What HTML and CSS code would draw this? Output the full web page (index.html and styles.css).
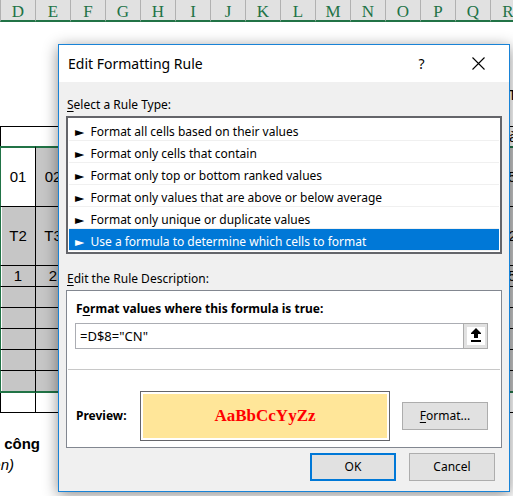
FILE: index.html
```html
<!DOCTYPE html>
<html lang="en">
<head>
<meta charset="utf-8">
<title>Edit Formatting Rule</title>
<link rel="stylesheet" href="styles.css">
</head>
<body>
<main class="sheet">
  <table class="grid">
    <thead>
      <tr><th>D</th><th>E</th><th>F</th><th>G</th><th>H</th><th>I</th><th>J</th><th>K</th><th>L</th><th>M</th><th>N</th><th>O</th><th>P</th><th>Q</th><th>R</th></tr>
    </thead>
    <tbody>
      <tr class="title-row"><td colspan="15">T</td></tr>
      <tr class="band-row"><td colspan="15">à</td></tr>
    </tbody>
    <tbody class="selection">
      <tr class="tall"><td class="active">01</td><td>02</td><td></td><td></td><td></td><td></td><td></td><td></td><td></td><td></td><td></td><td></td><td></td><td></td><td>15</td></tr>
      <tr class="tall"><td>T2</td><td>T3</td><td></td><td></td><td></td><td></td><td></td><td></td><td></td><td></td><td></td><td></td><td></td><td></td><td>T2</td></tr>
      <tr><td>1</td><td>2</td><td></td><td></td><td></td><td></td><td></td><td></td><td></td><td></td><td></td><td></td><td></td><td></td><td>15</td></tr>
      <tr><td></td><td></td><td></td><td></td><td></td><td></td><td></td><td></td><td></td><td></td><td></td><td></td><td></td><td></td><td></td></tr>
      <tr><td></td><td></td><td></td><td></td><td></td><td></td><td></td><td></td><td></td><td></td><td></td><td></td><td></td><td></td><td></td></tr>
      <tr><td></td><td></td><td></td><td></td><td></td><td></td><td></td><td></td><td></td><td></td><td></td><td></td><td></td><td></td><td></td></tr>
      <tr><td></td><td></td><td></td><td></td><td></td><td></td><td></td><td></td><td></td><td></td><td></td><td></td><td></td><td></td><td></td></tr>
      <tr class="last"><td></td><td></td><td></td><td></td><td></td><td></td><td></td><td></td><td></td><td></td><td></td><td></td><td></td><td></td><td></td></tr>
    </tbody>
    <tbody class="after">
      <tr><td></td><td></td><td></td><td></td><td></td><td></td><td></td><td></td><td></td><td></td><td></td><td></td><td></td><td></td><td></td></tr>
    </tbody>
  </table>
  <div class="notes">
    <p class="note-strong"><span><span class="marked">n</span> công</span></p>
    <p class="note-em">ên)</p>
  </div>
</main>

<section class="dialog" role="dialog" aria-labelledby="dialog-title">
  <header class="titlebar">
    <h1 id="dialog-title">Edit Formatting Rule</h1>
    <button class="caption" type="button" aria-label="Help">?</button>
    <button class="caption" type="button" aria-label="Close">
      <svg width="13" height="13" viewBox="0 0 13 13" fill="none" stroke="#000" stroke-width="1.1"><path d="M.5 .5l12 12M12.5 .5l-12 12"/></svg>
    </button>
  </header>
  <form class="body">
    <label class="caption-label" for="rule-type"><u>S</u>elect a Rule Type:</label>
    <select class="rules" id="rule-type" size="6">
      <option>►&nbsp; Format all cells based on their values</option>
      <option>►&nbsp; Format only cells that contain</option>
      <option>►&nbsp; Format only top or bottom ranked values</option>
      <option>►&nbsp; Format only values that are above or below average</option>
      <option>►&nbsp; Format only unique or duplicate values</option>
      <option selected>►&nbsp; Use a formula to determine which cells to format</option>
    </select>
    <p class="caption-label"><u>E</u>dit the Rule Description:</p>
    <div class="description">
      <div class="formula">
        <label for="formula">F<u>o</u>rmat values where this formula is true:</label>
        <div class="field">
          <input id="formula" type="text" value="=D$8=&quot;CN&quot;">
          <button class="collapse" type="button" aria-label="Collapse dialog">
            <svg width="18" height="18" viewBox="0 0 18 18"><path fill="#fff" d="M0 0h18v18H0z"/><path d="M9 1l5 5v1h-3v4H7V7H4V6zM4 13h10v2H4z"/></svg>
          </button>
        </div>
      </div>
      <div class="preview">
        <span class="preview-label">Preview:</span>
        <div class="sample"><span>AaBbCcYyZz</span></div>
        <button class="push" type="button"><u>F</u>ormat...</button>
      </div>
    </div>
    <footer class="actions">
      <button class="push default" type="button">OK</button>
      <button class="push" type="button">Cancel</button>
    </footer>
  </form>
</section>
</body>
</html>
```
FILE: styles.css
```css
* { box-sizing: border-box; }

body {
  margin: 0;
  min-height: 100vh;
  position: relative;
  overflow: hidden;
  background: #fff;
  color: #000;
  font: 12px/16px "Noto Sans", "DejaVu Sans", sans-serif;
}

h1, p { margin: 0; }

button, input, select { font: inherit; color: inherit; border-radius: 0; }

u { text-underline-offset: 2px; }

/* Worksheet */
.sheet { overflow: hidden; }

.grid {
  width: 525px;
  table-layout: fixed;
  border-collapse: separate;
  border-spacing: 0;
  font: 15px/18px "Liberation Sans", sans-serif;
}

.grid th, .grid td { padding: 0; text-align: center; }

.grid th {
  height: 22px;
  padding-top: 4px;
  background: #e1e1e1;
  border-left: 1px solid #b1b1b1;
  border-bottom: 2px solid #217346;
  color: #217346;
  font: 17px/16px "Liberation Serif", serif;
}

.title-row td, .band-row td { text-align: left; padding-left: 508px; overflow: hidden; }
.title-row td { height: 104px; padding-top: 42px; }
.band-row td {
  height: 20px;
  border-top: 1px solid #000;
  border-left: 1px solid #000;
}

.selection td, .after td {
  height: 21px;
  border-left: 1px solid #000;
  border-bottom: 1px solid #000;
}
.selection td { background: #c6c6c6; }
.selection td:first-child {
  border-left-color: #217346;
  box-shadow: inset 1px 0 #fff;
}
.selection .tall td { height: 59px; }
.selection .tall:first-child td { height: 61px; border-top: 2px solid #217346; }
.selection td.active { background: #fff; }
.selection .last td { height: 22px; border-bottom: 2px solid #217346; }
.after td { height: 20px; }

.notes { width: 40px; padding-top: 20px; font: 15px/21px "Liberation Sans", sans-serif; }
.note-strong {
  display: flex;
  justify-content: flex-end;
  white-space: nowrap;
  font-weight: bold;
}
.marked { color: #9ff; }
.note-em { display: flex; justify-content: flex-end; width: 14px; font-style: italic; }

/* Dialog */
.dialog {
  position: absolute;
  top: 44px;
  left: 58px;
  right: 3px;
  background: #f0f0f0;
  border: 1px solid #1883d7;
  box-shadow: 0 3px 14px rgba(0, 0, 0, .45);
}

.titlebar {
  display: flex;
  align-items: center;
  height: 37px;
  padding: 0 2px 0 9px;
  background: #fff;
}
.titlebar h1 { flex: 1; font-size: 14px; line-height: 20px; font-weight: normal; }
.caption {
  display: flex;
  align-items: center;
  justify-content: center;
  width: 57px;
  height: 36px;
  padding: 0;
  border: 0;
  background: none;
  font-size: 14px;
}

.body { padding: 15px 7px 10px; }

.caption-label { display: block; height: 19px; padding-left: 1px; }

.rules {
  display: block;
  width: 100%;
  height: 138px;
  margin-bottom: 17px;
  padding: 1px;
  overflow: hidden;
  border: 2px solid #64656a;
  background: #fff;
  outline: 0;
}
.rules option {
  height: 22px;
  min-height: 22px;
  padding: 4px 6px 1px;
  border-bottom: 1px solid #f0f0f0;
  line-height: 16px;
}
.rules option:checked {
  background: linear-gradient(#0078d7, #0078d7);
  -webkit-text-fill-color: #fff;
}

.description { padding: 0 1px; border: 1px solid #828790; background: #fff; }
.formula { padding: 10px 12px 20px 7px; border-bottom: 1px solid #c8c8c8; }
.formula label { display: block; height: 22px; padding-left: 1px; font-weight: bold; }
.field { display: flex; height: 26px; }
.field input {
  flex: 1;
  min-width: 0;
  padding: 0 4px;
  border: 1px solid #abadb3;
  border-right: 0;
  background: #fff;
  font-size: 13px;
  outline: 0;
}
.collapse {
  display: grid;
  place-items: center;
  width: 25px;
  padding: 0;
  border: 1px solid #acacac;
  background: #e1e1e1;
}

.preview { display: flex; align-items: center; padding: 21px 12px 6px 8px; }
.preview-label { width: 64px; font-weight: bold; }
.sample {
  flex: 1;
  height: 50px;
  padding: 2px;
  border: 1px solid #64656a;
}
.sample span {
  display: grid;
  place-items: center;
  height: 100%;
  background: #ffe699;
  color: #f00;
  font: bold 17px/20px "Liberation Serif", serif;
}
.push {
  width: 86px;
  height: 28px;
  padding: 0;
  border: 1px solid #adadad;
  background: #e1e1e1;
}
.preview .push { margin-left: 12px; }
.push.default { border: 2px solid #0078d7; }

.actions { display: flex; justify-content: flex-end; gap: 13px; padding: 5px 7px 0; }
```
